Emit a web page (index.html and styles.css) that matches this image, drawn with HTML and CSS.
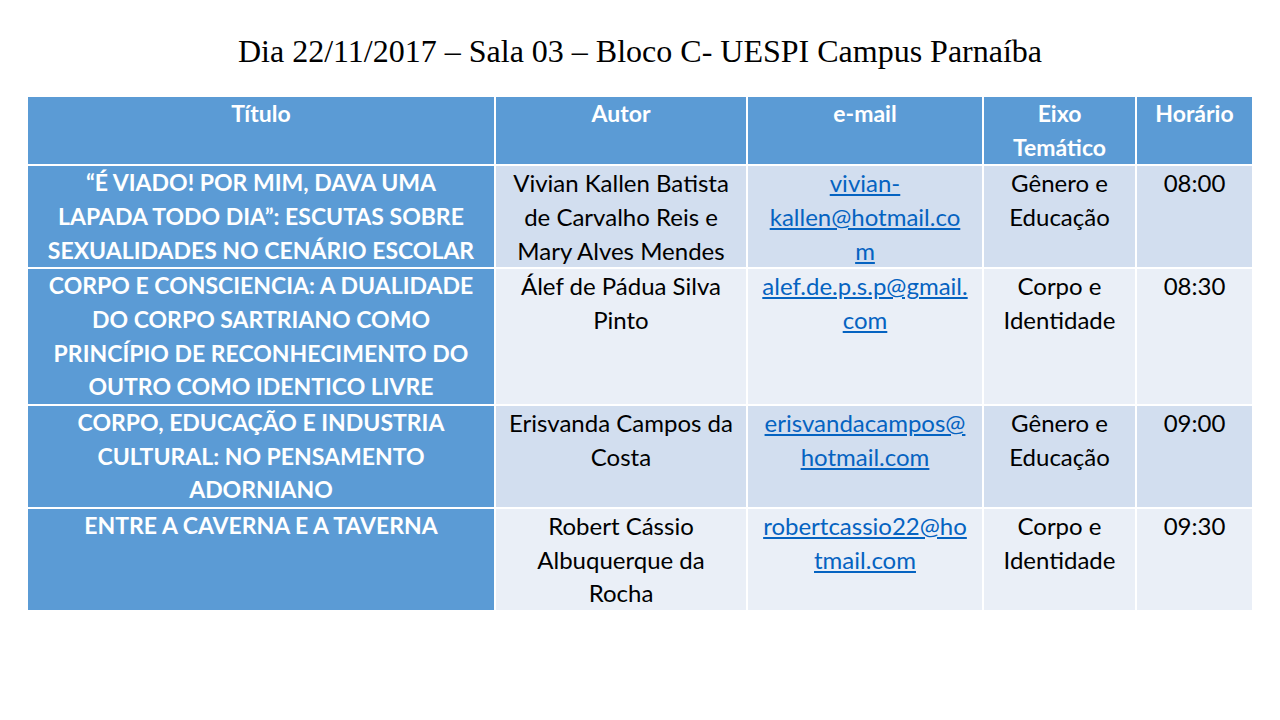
FILE: index.html
```html
<!DOCTYPE html>
<html lang="pt-BR">
<head>
<meta charset="utf-8">
<title>Dia 22/11/2017 – Sala 03</title>
<link rel="stylesheet" href="styles.css">
</head>
<body>
<div class="slide">
  <h1 class="title">Dia 22/11/2017 – Sala 03 – Bloco C- UESPI Campus Parnaíba</h1>
  <table class="grade">
    <colgroup>
      <col class="c-titulo"><col class="c-autor"><col class="c-email"><col class="c-eixo"><col class="c-hora">
    </colgroup>
    <thead>
      <tr>
        <th>Título</th>
        <th>Autor</th>
        <th>e-mail</th>
        <th>Eixo<br>Temático</th>
        <th>Horário</th>
      </tr>
    </thead>
    <tbody>
      <tr class="odd">
        <th>“É VIADO! POR MIM, DAVA UMA<br>LAPADA TODO DIA”: ESCUTAS SOBRE<br>SEXUALIDADES NO CENÁRIO ESCOLAR</th>
        <td>Vivian Kallen Batista<br>de Carvalho Reis e<br>Mary Alves Mendes</td>
        <td><a href="#">vivian-<br>kallen@hotmail.co<br>m</a></td>
        <td>Gênero e<br>Educação</td>
        <td>08:00</td>
      </tr>
      <tr class="even">
        <th>CORPO E CONSCIENCIA: A DUALIDADE<br>DO CORPO SARTRIANO COMO<br>PRINCÍPIO DE RECONHECIMENTO DO<br>OUTRO COMO IDENTICO LIVRE</th>
        <td>Álef de Pádua Silva<br>Pinto</td>
        <td><a href="#">alef.de.p.s.p@gmail.<br>com</a></td>
        <td>Corpo e<br>Identidade</td>
        <td>08:30</td>
      </tr>
      <tr class="odd">
        <th>CORPO, EDUCAÇÃO E INDUSTRIA<br>CULTURAL: NO PENSAMENTO<br>ADORNIANO</th>
        <td>Erisvanda Campos da<br>Costa</td>
        <td><a href="#">erisvandacampos@<br>hotmail.com</a></td>
        <td>Gênero e<br>Educação</td>
        <td>09:00</td>
      </tr>
      <tr class="even">
        <th>ENTRE A CAVERNA E A TAVERNA</th>
        <td>Robert Cássio<br>Albuquerque da<br>Rocha</td>
        <td><a href="#">robertcassio22@ho<br>tmail.com</a></td>
        <td>Corpo e<br>Identidade</td>
        <td>09:30</td>
      </tr>
    </tbody>
  </table>
</div>
</body>
</html>
```
FILE: styles.css
```css
html, body {
  margin: 0;
  padding: 0;
  background: #ffffff;
}
.slide {
  width: 1280px;
  height: 720px;
  overflow: hidden;
  display: flex;
  flex-direction: column;
  align-items: flex-start;
}
.title {
  align-self: stretch;
  margin: 33px 0 0 0;
  font-family: "Liberation Serif", "Times New Roman", serif;
  font-weight: normal;
  font-size: 32px;
  line-height: 36px;
  text-align: center;
  color: #000;
}
.grade {
  margin: 26px 0 0 26px;
  width: 1226px;
  border-collapse: collapse;
  table-layout: fixed;
  font-family: Lato, "Open Sans", sans-serif;
  font-size: 23px;
  line-height: 33.65px;
}
.c-titulo { width: 468px; }
.c-autor { width: 252px; }
.c-email { width: 236px; }
.c-eixo { width: 153px; }
.c-hora { width: 117px; }
.grade th, .grade td {
  border: 2px solid #ffffff;
  padding: 0 2px;
  text-align: center;
  vertical-align: top;
}
.grade thead th {
  background: #5b9bd5;
  color: #ffffff;
  font-weight: bold;
}
.grade tbody th {
  background: #5b9bd5;
  color: #ffffff;
  font-weight: bold;
}
.grade tbody td {
  color: #000000;
  font-size: 24px;
}
.grade tr.odd td { background: #d2deef; }
.grade tr.even td { background: #eaeff7; }
.grade a {
  color: #0563c1;
  text-decoration: underline;
}
```
